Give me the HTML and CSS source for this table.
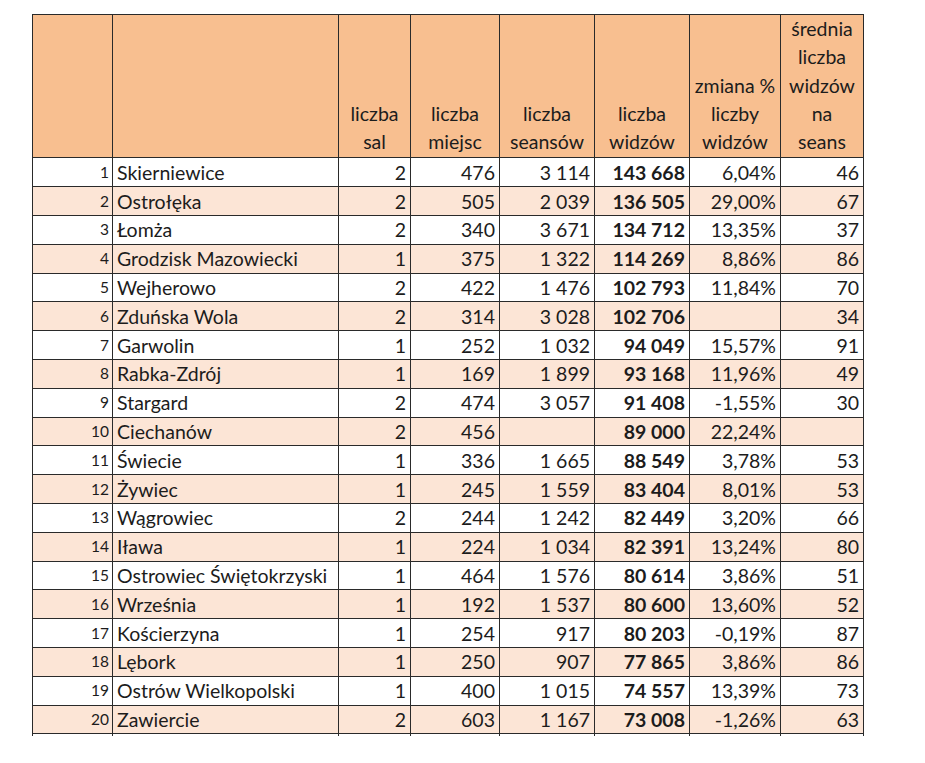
FILE: index.html
```html
<!DOCTYPE html>
<html lang="pl">
<head>
<meta charset="utf-8">
<title>Kina</title>
<link rel="stylesheet" href="styles.css">
</head>
<body>
<div class="page">
<table class="tbl">
<colgroup>
<col class="c-idx"><col class="c-name"><col class="c-sal"><col class="c-miejsc"><col class="c-seans"><col class="c-widz"><col class="c-zm"><col class="c-sr">
</colgroup>
<thead>
<tr>
<th></th><th></th>
<th>liczba<br>sal</th>
<th>liczba<br>miejsc</th>
<th>liczba<br>seansów</th>
<th>liczba<br>widzów</th>
<th>zmiana %<br>liczby<br>widzów</th>
<th>średnia<br>liczba<br>widzów<br>na<br>seans</th>
</tr>
</thead>
<tbody>
<tr><td class="idx">1</td><td class="name">Skierniewice</td><td>2</td><td>476</td><td>3 114</td><td class="b">143 668</td><td>6,04%</td><td>46</td></tr>
<tr class="alt"><td class="idx">2</td><td class="name">Ostrołęka</td><td>2</td><td>505</td><td>2 039</td><td class="b">136 505</td><td>29,00%</td><td>67</td></tr>
<tr><td class="idx">3</td><td class="name">Łomża</td><td>2</td><td>340</td><td>3 671</td><td class="b">134 712</td><td>13,35%</td><td>37</td></tr>
<tr class="alt"><td class="idx">4</td><td class="name">Grodzisk Mazowiecki</td><td>1</td><td>375</td><td>1 322</td><td class="b">114 269</td><td>8,86%</td><td>86</td></tr>
<tr><td class="idx">5</td><td class="name">Wejherowo</td><td>2</td><td>422</td><td>1 476</td><td class="b">102 793</td><td>11,84%</td><td>70</td></tr>
<tr class="alt"><td class="idx">6</td><td class="name">Zduńska Wola</td><td>2</td><td>314</td><td>3 028</td><td class="b">102 706</td><td></td><td>34</td></tr>
<tr><td class="idx">7</td><td class="name">Garwolin</td><td>1</td><td>252</td><td>1 032</td><td class="b">94 049</td><td>15,57%</td><td>91</td></tr>
<tr class="alt"><td class="idx">8</td><td class="name">Rabka-Zdrój</td><td>1</td><td>169</td><td>1 899</td><td class="b">93 168</td><td>11,96%</td><td>49</td></tr>
<tr><td class="idx">9</td><td class="name">Stargard</td><td>2</td><td>474</td><td>3 057</td><td class="b">91 408</td><td>-1,55%</td><td>30</td></tr>
<tr class="alt"><td class="idx">10</td><td class="name">Ciechanów</td><td>2</td><td>456</td><td></td><td class="b">89 000</td><td>22,24%</td><td></td></tr>
<tr><td class="idx">11</td><td class="name">Świecie</td><td>1</td><td>336</td><td>1 665</td><td class="b">88 549</td><td>3,78%</td><td>53</td></tr>
<tr class="alt"><td class="idx">12</td><td class="name">Żywiec</td><td>1</td><td>245</td><td>1 559</td><td class="b">83 404</td><td>8,01%</td><td>53</td></tr>
<tr><td class="idx">13</td><td class="name">Wągrowiec</td><td>2</td><td>244</td><td>1 242</td><td class="b">82 449</td><td>3,20%</td><td>66</td></tr>
<tr class="alt"><td class="idx">14</td><td class="name">Iława</td><td>1</td><td>224</td><td>1 034</td><td class="b">82 391</td><td>13,24%</td><td>80</td></tr>
<tr><td class="idx">15</td><td class="name">Ostrowiec Świętokrzyski</td><td>1</td><td>464</td><td>1 576</td><td class="b">80 614</td><td>3,86%</td><td>51</td></tr>
<tr class="alt"><td class="idx">16</td><td class="name">Września</td><td>1</td><td>192</td><td>1 537</td><td class="b">80 600</td><td>13,60%</td><td>52</td></tr>
<tr><td class="idx">17</td><td class="name">Kościerzyna</td><td>1</td><td>254</td><td>917</td><td class="b">80 203</td><td>-0,19%</td><td>87</td></tr>
<tr class="alt"><td class="idx">18</td><td class="name">Lębork</td><td>1</td><td>250</td><td>907</td><td class="b">77 865</td><td>3,86%</td><td>86</td></tr>
<tr><td class="idx">19</td><td class="name">Ostrów Wielkopolski</td><td>1</td><td>400</td><td>1 015</td><td class="b">74 557</td><td>13,39%</td><td>73</td></tr>
<tr class="alt"><td class="idx">20</td><td class="name">Zawiercie</td><td>2</td><td>603</td><td>1 167</td><td class="b">73 008</td><td>-1,26%</td><td>63</td></tr>
<tr class="stub"><td></td><td></td><td></td><td></td><td></td><td></td><td></td><td></td></tr>
</tbody>
</table>
</div>
</body>
</html>
```
FILE: styles.css
```css
html, body {
  margin: 0;
  padding: 0;
  background: #ffffff;
}
.page {
  padding: 14px 0 0 32px;
  height: 763px;
  box-sizing: border-box;
  overflow: hidden;
}
.tbl {
  border-collapse: collapse;
  table-layout: fixed;
  width: 831px;
  font-family: "Lato", "Liberation Sans", sans-serif;
  font-size: 19.5px;
  color: #1c1c1c;
}
.c-idx { width: 80px; }
.c-name { width: 226px; }
.c-sal { width: 72px; }
.c-miejsc { width: 89px; }
.c-seans { width: 95px; }
.c-widz { width: 95px; }
.c-zm { width: 91px; }
.c-sr { width: 83px; }

.tbl th {
  background: #f8bf90;
  font-weight: normal;
  text-align: center;
  vertical-align: bottom;
  line-height: 28.3px;
  padding: 0 1px 1px;
  border: 1.5px solid #2a2a2a;
  white-space: nowrap;
}
.tbl td {
  border: 1.5px solid #2a2a2a;
  border-top-width: 1px;
  border-bottom-width: 1px;
  height: 27.8px;
  padding: 0 4px 0 4px;
  text-align: right;
  line-height: 27px;
  white-space: nowrap;
  overflow: hidden;
}
.tbl tr.alt td {
  background: #fce5d6;
}
.tbl td.idx {
  font-size: 15.5px;
  padding-right: 3px;
}
.tbl td.name {
  text-align: left;
  padding-left: 4px;
}
.tbl td.b {
  font-weight: bold;
}
.tbl tr.stub td {
  height: 2px;
  padding: 0;
  line-height: 0;
  border-bottom: none;
}
```
